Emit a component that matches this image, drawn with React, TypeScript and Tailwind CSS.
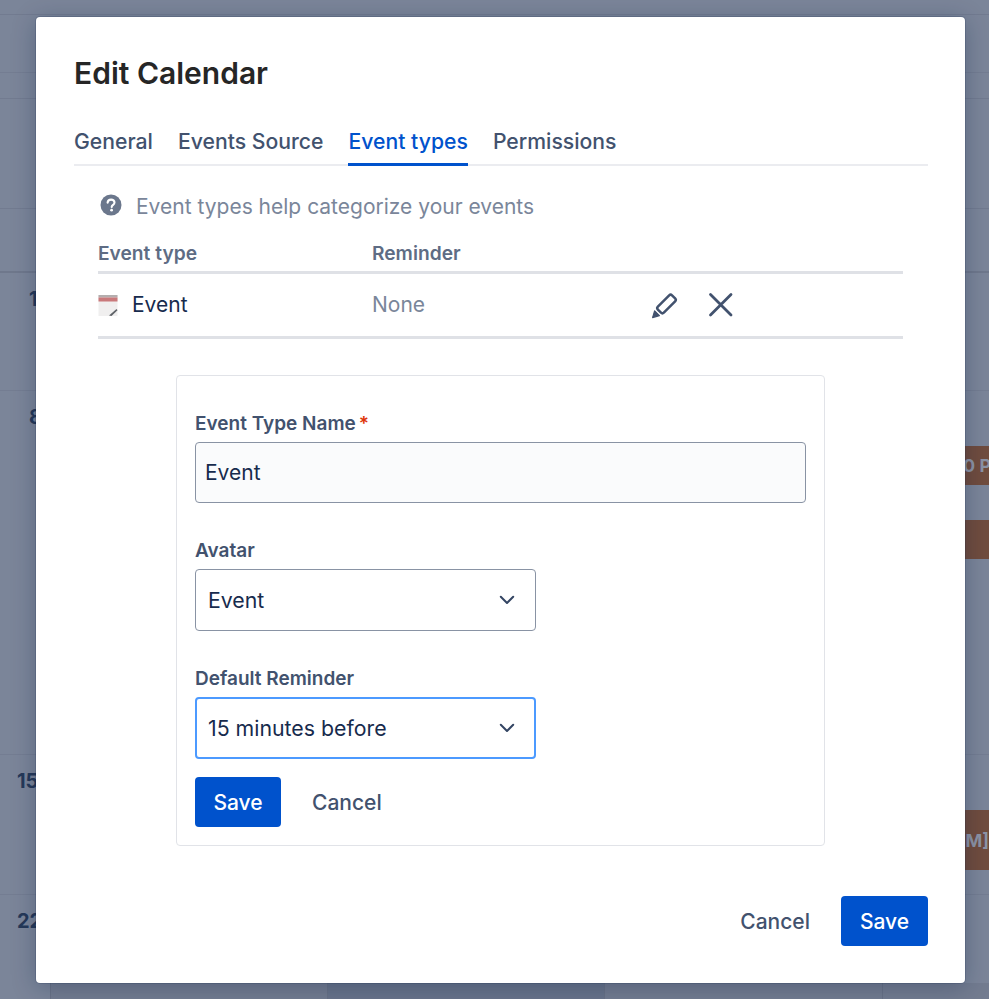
import React from "react";

const Chevron = () => (
  <svg width="16" height="10" viewBox="0 0 16 10" fill="none" className="shrink-0">
    <path d="M1.8 1.8 8 8l6.2-6.2" stroke="#344563" strokeWidth="2" strokeLinecap="round" strokeLinejoin="round" />
  </svg>
);

const Pencil = () => (
  <svg width="28" height="28" viewBox="0 0 28 28" fill="none">
    <rect x="5.5" y="8.8" width="20" height="8.4" rx="2" stroke="#42526e" strokeWidth="2.5" transform="rotate(-45 15.5 13)" />
    <path d="M3.6 19.8 8.4 24.6 1.6 26.6Z" fill="#42526e" stroke="#42526e" strokeWidth="1.2" strokeLinejoin="round" />
  </svg>
);

const Cross = () => (
  <svg width="26" height="26" viewBox="0 0 26 26" fill="none">
    <path d="M2.5 2.5 23 23M23 2.5 2.5 23" stroke="#42526e" strokeWidth="2.8" strokeLinecap="round" />
  </svg>
);

const CalendarEmoji = () => (
  <svg width="20" height="22" viewBox="0 0 20 22" className="shrink-0">
    <rect x="0.5" y="1" width="19" height="21" fill="#f0efef" />
    <rect x="0.5" y="1" width="19" height="2.5" fill="#b4aeae" />
    <rect x="0.5" y="3.5" width="19" height="4" fill="#c9797b" />
    <path d="M11 21.5 18.5 15l1 1.2-6 5.8Z" fill="#5f6368" />
  </svg>
);

const Help = () => (
  <svg width="22" height="22" viewBox="0 0 22 22" className="-mt-[4px] shrink-0">
    <circle cx="11" cy="11" r="10.5" fill="#6b778c" />
    <path d="M7.6 8.6c.2-2 1.6-3 3.5-3 2 0 3.4 1.2 3.4 2.8 0 1.4-.8 2-1.7 2.7-.8.6-1.1 1-1.1 2" fill="none" stroke="#fff" strokeWidth="2.1" strokeLinecap="round" />
    <circle cx="11.6" cy="16.2" r="1.4" fill="#fff" />
  </svg>
);

function Select({ value, focused }: { value: string; focused?: boolean }) {
  return (
    <div
      className={
        focused
          ? "flex h-[62px] w-[341px] items-center justify-between rounded-[4px] border-2 border-[#4c9aff] bg-white pl-[11px] pr-[19px]"
          : "flex h-[62px] w-[341px] items-center justify-between rounded-[4px] border border-[#8993a4] bg-white pl-[12px] pr-[20px]"
      }
    >
      <span className="pt-[1px] text-[21.3px] text-[#172b4d]">{value}</span>
      <Chevron />
    </div>
  );
}

export default function App() {
  return (
    <div className="relative h-[999px] w-[989px] overflow-hidden bg-[#7b8599] font-[family-name:Inter,sans-serif]">
      {/* Calendar behind the dialog */}
      <div className="flex h-full flex-col text-[20px] font-bold text-[#253858]">
        <div className="h-[15px] border-b border-[#727b90]" />
        <div className="h-[58px] border-b border-[#747d92]" />
        <div className="h-[26px] border-b border-[#727b90]" />
        <div className="h-[110px] border-b border-[#727b90]" />
        <div className="h-[64px] border-b-2 border-[#6f788c]" />
        <div className="h-[118px] border-b border-[#747d92] pl-[29px] pt-[11px]">1</div>
        <div className="h-[364px] border-b border-[#747d92] pl-[29px] pt-[11px]">
          8
          <div className="ml-[936px] mt-[14px] flex h-[39px] w-[24px] items-center overflow-hidden bg-[#704c3e] text-[18px] text-[#8c93a5] whitespace-nowrap">
            <span className="-ml-[2px]">0 P</span>
          </div>
          <div className="ml-[936px] mt-[35px] h-[39px] w-[24px] bg-[#704c3e]" />
        </div>
        <div className="h-[140px] border-b border-[#747d92] pl-[17px] pt-[11px]">
          15
          <div className="ml-[948px] mt-[14px] flex h-[60px] w-[24px] items-center justify-end overflow-hidden bg-[#704c3e] text-[18px] text-[#8c93a5] whitespace-nowrap">
            PM]
          </div>
        </div>
        <div className="h-[88px] pl-[17px] pt-[11px]">22</div>
        <div className="flex h-[16px] pl-[50px]">
          <div className="w-[277px] border-l border-[#697286] bg-[#737c90]" />
          <div className="w-[277px] border-l border-[#697286] bg-[#69748a]" />
          <div className="w-[278px] border-l border-[#697286] bg-[#737c90]" />
          <div className="flex-1 border-l border-[#697286] bg-[#737c90]" />
        </div>
      </div>

      {/* Dialog */}
      <div className="absolute left-[36px] top-[17px] flex h-[966px] w-[929px] flex-col rounded-[4px] bg-white pl-[38px] pr-[37px] pt-[36px] shadow-[0_0_0_1px_rgba(9,30,66,0.15),0_4px_24px_rgba(9,30,66,0.3)]">
        <h1 className="text-[30px] font-semibold leading-[40px] text-[#262626]">Edit Calendar</h1>

        <div className="mt-[24px] flex h-[49px] gap-[25px] border-b-2 border-[#ebecf0] text-[21.2px] font-medium text-[#42526e]">
          <div className="h-[49px] pt-[8px] leading-[32px]">General</div>
          <div className="h-[49px] pt-[8px] leading-[32px]">Events Source</div>
          <div className="h-[49px] border-b-[3px] border-[#0052cc] pt-[8px] leading-[32px] text-[#0052cc]">Event types</div>
          <div className="h-[49px] pt-[8px] leading-[32px]">Permissions</div>
        </div>

        <div className="ml-[24px] mr-[25px] flex flex-col">
          <div className="mt-[28px] flex h-[26px] items-center gap-[14px] pl-[2px] text-[21px] text-[#7a869a]">
            <Help />
            <span>Event types help categorize your events</span>
          </div>

          <div className="mt-[21px] flex h-[33px] items-start border-b-[3px] border-[#dfe1e6] text-[19.2px] font-semibold text-[#5e6c84]">
            <div className="w-[274px] leading-[24px]">Event type</div>
            <div className="leading-[24px]">Reminder</div>
          </div>
          <div className="flex h-[65px] items-center border-b-[3px] border-[#dfe1e6] text-[21px]">
            <div className="flex w-[274px] items-center gap-[14px] text-[#172b4d]">
              <CalendarEmoji />
              <span>Event</span>
            </div>
            <div className="w-[279px] text-[#7a869a]">None</div>
            <div className="flex items-center gap-[29px]">
              <Pencil />
              <Cross />
            </div>
          </div>
        </div>

        <div className="ml-[102px] mt-[36px] flex h-[471px] w-[649px] flex-col rounded-[4px] border border-[#e1e3e8] px-[18px] pt-[36px]">
          <label className="flex items-baseline gap-[3px] text-[19px] font-semibold leading-[24px] text-[#42526e]">
            Event Type Name<span className="text-[#de350b]">*</span>
          </label>
          <div className="mt-[6px] flex h-[61px] w-[611px] items-center rounded-[4px] border border-[#8993a4] bg-[#fafbfc] px-[9px] text-[21px] text-[#172b4d]">
            Event
          </div>

          <label className="mt-[36px] text-[19px] font-semibold leading-[24px] text-[#42526e]">Avatar</label>
          <div className="mt-[6px]"><Select value="Event" /></div>

          <label className="mt-[36px] text-[19px] font-semibold leading-[24px] text-[#42526e]">Default Reminder</label>
          <div className="mt-[6px]"><Select value="15 minutes before" focused /></div>

          <div className="mt-[18px] flex items-center gap-[31px] text-[21px] font-medium">
            <div className="flex h-[50px] w-[86px] items-center justify-center rounded-[4px] bg-[#0052cc] pt-[1px] text-white">Save</div>
            <div className="pt-[1px] text-[#42526e]">Cancel</div>
          </div>
        </div>

        <div className="mt-[50px] flex items-center justify-end gap-[31px] text-[21px] font-medium">
          <div className="pt-[1px] text-[#42526e]">Cancel</div>
          <div className="flex h-[50px] w-[87px] items-center justify-center rounded-[4px] bg-[#0052cc] pt-[1px] text-white">Save</div>
        </div>
      </div>
    </div>
  );
}
